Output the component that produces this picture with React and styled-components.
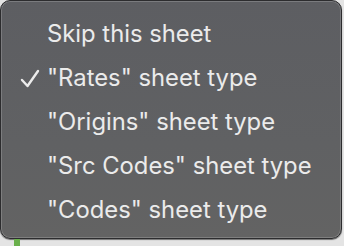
import styled, { createGlobalStyle } from 'styled-components';

const Global = createGlobalStyle`
  html, body {
    margin: 0;
    padding: 0;
    background: #e6e6e6;
    overflow: hidden;
  }
`;

const Page = styled.div`
  width: 344px;
  height: 246px;
  display: flex;
  flex-direction: column;
  background: #e4e4e4;
`;

const Menu = styled.div`
  width: 342px;
  height: 239px;
  box-sizing: border-box;
  border-radius: 10px;
  border: 1px solid #2c2c2e;
  box-shadow: inset 0 0 0 1px rgba(255, 255, 255, 0.18), 0 1px 1px rgba(0, 0, 0, 0.5);
  background: linear-gradient(180deg, #5d5e62 0%, #606163 60%, #636363 100%);
  padding: 10px 0 6px;
  display: flex;
  flex-direction: column;
`;

const Item = styled.div`
  height: 44px;
  display: flex;
  align-items: center;
  padding-left: 46px;
  position: relative;
  font-family: Inter, 'Liberation Sans', sans-serif;
  font-size: 23.8px;
  color: #ebebeb;
`;

const Check = styled.svg`
  position: absolute;
  left: 19px;
  top: 14px;
  width: 20px;
  height: 19px;
`;

const Footer = styled.div`
  flex: 1;
  display: flex;
  padding-left: 14px;
`;

const GreenMark = styled.div`
  width: 6px;
  height: 100%;
  background: #6ab04c;
`;

const items = [
  { label: 'Skip this sheet' },
  { label: '"Rates" sheet type', checked: true },
  { label: '"Origins" sheet type' },
  { label: '"Src Codes" sheet type' },
  { label: '"Codes" sheet type' },
];

export default function App() {
  return (
    <Page>
      <Global />
      <Menu>
        {items.map((it) => (
          <Item key={it.label}>
            {it.checked && (
              <Check viewBox="0 0 20 19">
                <path d="M2 11 L7.5 17 L18 2" fill="none" stroke="#ececec" strokeWidth="2.4" strokeLinecap="round" strokeLinejoin="round" />
              </Check>
            )}
            {it.label}
          </Item>
        ))}
      </Menu>
      <Footer>
        <GreenMark />
      </Footer>
    </Page>
  );
}
